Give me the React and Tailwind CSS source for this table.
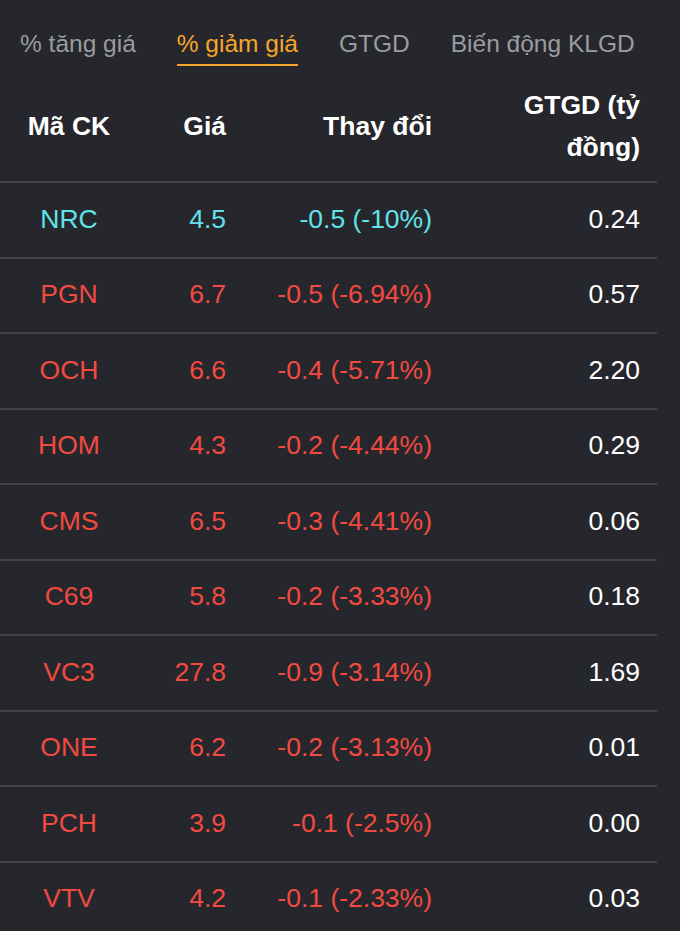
const rows = [
  { code: 'NRC', price: '4.5', change: '-0.5 (-10%)', value: '0.24', floor: true },
  { code: 'PGN', price: '6.7', change: '-0.5 (-6.94%)', value: '0.57' },
  { code: 'OCH', price: '6.6', change: '-0.4 (-5.71%)', value: '2.20' },
  { code: 'HOM', price: '4.3', change: '-0.2 (-4.44%)', value: '0.29' },
  { code: 'CMS', price: '6.5', change: '-0.3 (-4.41%)', value: '0.06' },
  { code: 'C69', price: '5.8', change: '-0.2 (-3.33%)', value: '0.18' },
  { code: 'VC3', price: '27.8', change: '-0.9 (-3.14%)', value: '1.69' },
  { code: 'ONE', price: '6.2', change: '-0.2 (-3.13%)', value: '0.01' },
  { code: 'PCH', price: '3.9', change: '-0.1 (-2.5%)', value: '0.00' },
  { code: 'VTV', price: '4.2', change: '-0.1 (-2.33%)', value: '0.03' },
];

const tabs = ['% tăng giá', '% giảm giá', 'GTGD', 'Biến động KLGD'];

export default function App() {
  return (
    <div className="w-[680px] h-[931px] overflow-hidden bg-[#26272c] font-['Liberation_Sans',Arial,sans-serif]">
      {/* Tabs */}
      <div className="flex gap-[41px] pl-[20px] pt-[29px] h-[82px]">
        {tabs.map((t, i) => (
          <div key={t} className="flex flex-col">
            <span className={`text-[24.5px] leading-[30px] ${i === 1 ? 'text-[#f5a52c]' : 'text-[#9b9ca0]'}`}>{t}</span>
            {i === 1 && <div className="mt-[5px] h-[2px] bg-[#f5a52c]" />}
          </div>
        ))}
      </div>

      {/* Table */}
      <table className="w-[657px] table-fixed border-collapse">
        <colgroup>
          <col className="w-[138px]" />
          <col className="w-[104px]" />
          <col className="w-[206px]" />
          <col className="w-[209px]" />
        </colgroup>
        <thead>
          <tr className="h-[100px] border-b-2 border-[#424348] text-white font-bold text-[26.5px] leading-[42px]">
            <th className="text-center font-bold pb-[12px]">Mã CK</th>
            <th className="text-right pr-[16px] font-bold pb-[12px]">Giá</th>
            <th className="text-right pr-[16px] font-bold pb-[12px]">Thay đổi</th>
            <th className="text-right pr-[17px] font-bold pb-[12px]">GTGD (tỷ<br />đồng)</th>
          </tr>
        </thead>
        <tbody>
          {rows.map((r) => {
            const color = r.floor ? 'text-[#62e3ea]' : 'text-[#f24a40]';
            return (
              <tr key={r.code} className="h-[75.5px] border-b-2 border-[#424348] text-[26.5px]">
                <td className={`text-center ${color}`}>{r.code}</td>
                <td className={`text-right pr-[16px] ${color}`}>{r.price}</td>
                <td className={`text-right pr-[16px] ${color}`}>{r.change}</td>
                <td className="text-right pr-[17px] text-white">{r.value}</td>
              </tr>
            );
          })}
        </tbody>
      </table>
    </div>
  );
}
